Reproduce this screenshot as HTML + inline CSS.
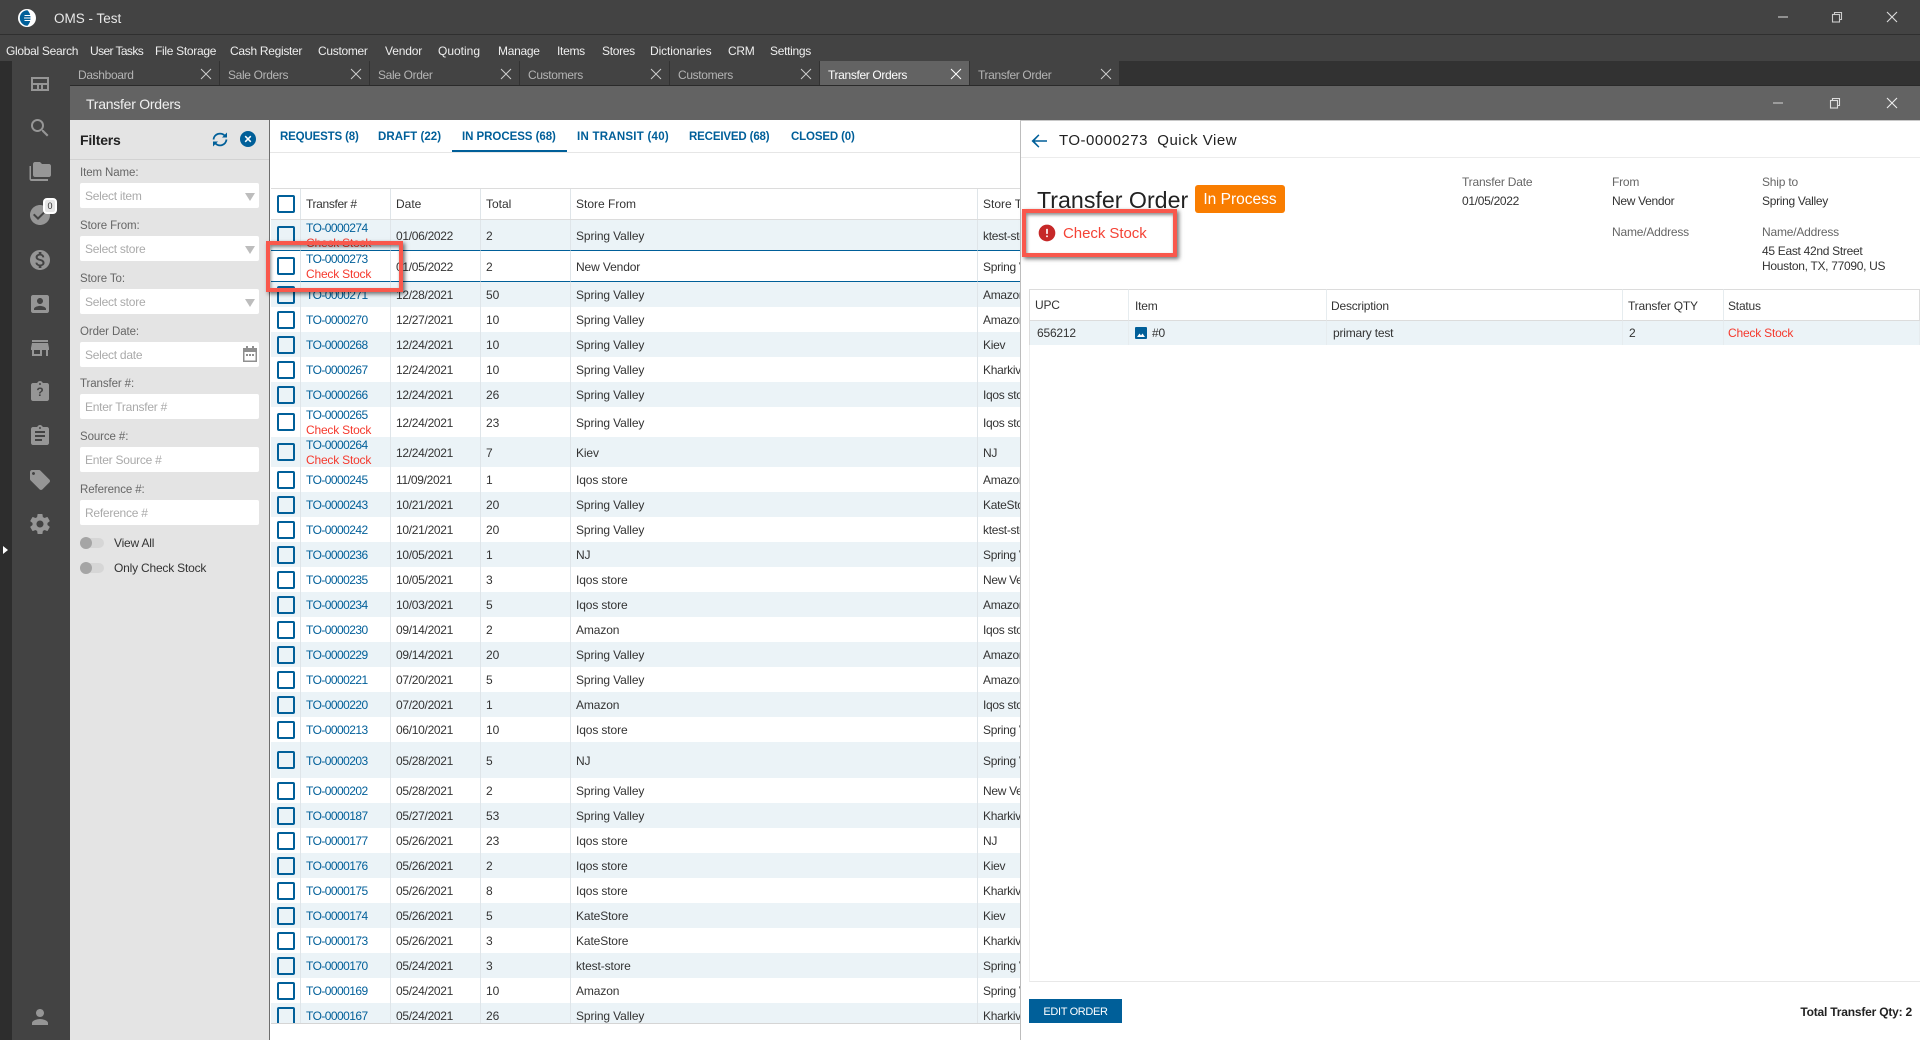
<!DOCTYPE html>
<html lang="en">
<head>
<meta charset="utf-8">
<title>OMS - Test</title>
<style>
*{box-sizing:border-box}
html,body{margin:0;padding:0;width:1920px;height:1040px;overflow:hidden;background:#fff;font-family:"Liberation Sans",sans-serif;font-size:12px;color:#333}
.a{position:absolute;white-space:nowrap}
svg{display:block}
.m{top:44px;color:#eee;font-size:12px;letter-spacing:-.3px;line-height:15px}
.tab{top:61px;height:24px;width:149px;background:#434343;color:#b4b4b4;font-size:12px;letter-spacing:-.35px;line-height:29px;padding-left:8px}
.tab.on{background:#636363;color:#fff}
.tab svg{position:absolute;right:7px;top:7px}
.ic{position:absolute;left:28px;width:24px;height:24px;fill:#969696}
.lb{left:80px;color:#666;font-size:11.5px;letter-spacing:-.1px;line-height:14px}
.in{left:80px;width:179px;height:25px;background:#fff;border-radius:2px;color:#aaa;font-size:12px;letter-spacing:-.25px;line-height:27px;padding-left:5px}
.in b{position:absolute;right:4px;top:10px;width:0;height:0;border-left:5px solid transparent;border-right:5px solid transparent;border-top:8px solid #bdbdbd}
.tg{left:80px;width:24px;height:10px;border-radius:5px;background:#d6d6d6}
.tg:before{content:"";position:absolute;left:0;top:-1px;width:12px;height:12px;border-radius:50%;background:#a5a5a5}
.tl{left:114px;font-size:12px;letter-spacing:-.2px;color:#333;line-height:15px}
.st{top:130px;color:#005f99;font-weight:bold;font-size:11.5px;letter-spacing:-.15px;line-height:15px}
table{border-collapse:separate;border-spacing:0;table-layout:fixed;position:absolute}
td{padding:2px 0 0 5px;border-right:1px solid #dfe5e9;line-height:15px;white-space:nowrap;overflow:hidden;vertical-align:middle;color:#333}
td:first-child{padding-top:0}
#g{left:0;top:0;width:760px}
#g td{font-size:12px}
#g td:nth-child(2){letter-spacing:-.55px}
#g td:nth-child(3){letter-spacing:-.3px}
#g td:nth-child(2) u{letter-spacing:-.2px}
#g td:nth-child(4){letter-spacing:-.1px}
#g td:nth-child(5){letter-spacing:-.12px}
#g td:nth-child(6){border-right:0;letter-spacing:-.3px}
#h td{padding-top:1px}
tr{height:25px}
tr.s td{background:#ebf3f7}
tr.d{height:30px}
.d td:nth-child(2),.sel td:nth-child(2){padding-top:0}
.d a,.sel a,.d u,.sel u{position:relative;top:1px}
a{color:#005f99;text-decoration:none}
u{display:block;color:#f5392d;text-decoration:none}
.c{display:block;width:18px;height:18px;margin-left:1px;border:2px solid #005f99;border-radius:2px}
tr.sel td{border-top:1px solid #005f99;border-bottom:1px solid #005f99;background:#fff}
.gl{color:#666;font-size:12px;letter-spacing:-.2px;line-height:15px}
.gv{color:#333;font-size:12px;letter-spacing:-.3px;line-height:15px}
.red{position:absolute;border:4px solid #f9584c;box-shadow:2px 2px 4px rgba(0,0,0,.55),inset 1px 2px 3px rgba(0,0,0,.45)}
#q td{font-size:12px;letter-spacing:-.2px;border-right:1px solid #e6ecef}
</style>
</head>
<body>
<div class="a" style="left:0;top:0;width:1920px;height:34px;background:#434343"></div>
<div class="a" style="left:0;top:34px;width:1920px;height:1px;background:#2f2f2f"></div>
<div class="a" style="left:0;top:35px;width:1920px;height:26px;background:#434343"></div>
<div class="a" style="left:0;top:61px;width:1920px;height:25px;background:#323232"></div>
<div class="a" style="left:0;top:85px;width:1920px;height:1px;background:#2a2a2a"></div>

<svg class="a" style="left:18px;top:9px" width="18" height="18" viewBox="0 0 18 18"><circle cx="9" cy="9" r="9" fill="#fff"/><path d="M9.500 1.300A7.700 7.700 0 0 0 9.500 16.700C12 14 12.500 11.500 12.500 9S12 4 9.500 1.300z" fill="#005f99"/><path d="M6.500 6.500h6.500M6 9h8.500M6.500 11.500h6.500" stroke="#fff" stroke-width="1.100"/></svg>
<div class="a" style="left:54px;top:10.500px;color:#e8e8e8;font-size:13.500px;letter-spacing:0;line-height:16px">OMS - Test</div>

<svg class="a" style="left:1777px;top:12px" width="12" height="10"><path d="M1 5h10" stroke="#bbb" stroke-width="1.300"/></svg>
<svg class="a" style="left:1831px;top:11px" width="12" height="12" fill="none" stroke="#ccc" stroke-width="1.100"><rect x="1.500" y="3.500" width="7" height="7.500"/><path d="M3.500 3.500V1.500h7v7H8.500"/></svg>
<svg class="a" style="left:1886px;top:11px" width="12" height="12"><path d="M1 1l10 10M11 1L1 11" stroke="#ddd" stroke-width="1.100"/></svg>

<div class="a m" style="left:6px">Global Search</div>
<div class="a m" style="left:90px;letter-spacing:-.6px">User Tasks</div>
<div class="a m" style="left:155px">File Storage</div>
<div class="a m" style="left:230px">Cash Register</div>
<div class="a m" style="left:318px">Customer</div>
<div class="a m" style="left:385px;letter-spacing:-.15px">Vendor</div>
<div class="a m" style="left:438px;letter-spacing:0">Quoting</div>
<div class="a m" style="left:498px">Manage</div>
<div class="a m" style="left:557px">Items</div>
<div class="a m" style="left:602px">Stores</div>
<div class="a m" style="left:650px;letter-spacing:-.1px">Dictionaries</div>
<div class="a m" style="left:728px">CRM</div>
<div class="a m" style="left:770px">Settings</div>

<div class="a tab" style="left:70px">Dashboard<svg width="12" height="12"><path d="M1 1l10 10M11 1L1 11" stroke="#ccc" stroke-width="1"/></svg></div>
<div class="a tab" style="left:220px">Sale Orders<svg width="12" height="12"><path d="M1 1l10 10M11 1L1 11" stroke="#ccc" stroke-width="1"/></svg></div>
<div class="a tab" style="left:370px">Sale Order<svg width="12" height="12"><path d="M1 1l10 10M11 1L1 11" stroke="#ccc" stroke-width="1"/></svg></div>
<div class="a tab" style="left:520px">Customers<svg width="12" height="12"><path d="M1 1l10 10M11 1L1 11" stroke="#ccc" stroke-width="1"/></svg></div>
<div class="a tab" style="left:670px">Customers<svg width="12" height="12"><path d="M1 1l10 10M11 1L1 11" stroke="#ccc" stroke-width="1"/></svg></div>
<div class="a tab on" style="left:820px">Transfer Orders<svg width="12" height="12"><path d="M1 1l10 10M11 1L1 11" stroke="#fff" stroke-width="1"/></svg></div>
<div class="a tab" style="left:970px">Transfer Order<svg width="12" height="12"><path d="M1 1l10 10M11 1L1 11" stroke="#ccc" stroke-width="1"/></svg></div>

<div class="a" style="left:0;top:61px;width:12px;height:979px;background:#2d2d2d"></div>
<div class="a" style="left:12px;top:61px;width:58px;height:979px;background:#434343"></div>

<svg class="ic" style="top:72px" viewBox="0 0 24 24"><path d="M3 5h18v14H3zM5 7v4h14V7zm0 6v4h4v-4zm6 0v4h2v-4zm4 0v4h4v-4z" fill-rule="evenodd"/></svg>
<svg class="ic" style="top:116px" viewBox="0 0 24 24"><path d="M15.500 14h-.79l-.28-.27A6.471 6.471 0 0 0 16 9.500 6.500 6.500 0 1 0 9.500 16c1.610 0 3.090-.59 4.230-1.570l.27.28v.79l5 4.990L20.490 19l-4.990-5zm-6 0C7.010 14 5 11.990 5 9.500S7.010 5 9.500 5 14 7.010 14 9.500 11.990 14 9.500 14z"/></svg>
<svg class="ic" style="top:160px" viewBox="0 0 24 24"><path d="M3 6H1.500v13c0 1.100.900 2 2 2H20v-2H3V6zm18-2h-7l-2-2H7c-1.100 0-2 .900-2 2v11c0 1.100.900 2 2 2h14c1.100 0 2-.900 2-2V6c0-1.100-.900-2-2-2z"/></svg>
<svg class="ic" style="top:203px" viewBox="0 0 24 24"><path d="M12 2C6.480 2 2 6.480 2 12s4.480 10 10 10 10-4.480 10-10S17.520 2 12 2zm-2 15l-5-5 1.410-1.410L10 14.170l7.590-7.590L19 8l-9 9z"/></svg>
<div class="a" style="left:43px;top:198px;width:14px;height:16px;background:#e6e6e6;border:2px solid #fff;border-radius:4px;font-size:9px;line-height:12px;text-align:center;color:#333">0</div>
<svg class="ic" style="top:248px" viewBox="0 0 24 24"><path d="M12 2C6.480 2 2 6.480 2 12s4.480 10 10 10 10-4.480 10-10S17.520 2 12 2zm1.410 16.090V20h-2.670v-1.930c-1.710-.360-3.160-1.460-3.270-3.400h1.960c.100 1.050.820 1.870 2.650 1.870 1.960 0 2.400-.980 2.400-1.590 0-.830-.440-1.610-2.670-2.140-2.480-.600-4.180-1.620-4.180-3.670 0-1.720 1.390-2.840 3.110-3.210V4h2.670v1.950c1.860.450 2.790 1.860 2.850 3.390H14.300c-.050-1.110-.640-1.870-2.220-1.870-1.500 0-2.400.680-2.400 1.640 0 .840.650 1.390 2.670 1.910s4.180 1.390 4.180 3.910c-.010 1.830-1.380 2.830-3.120 3.160z"/></svg>
<svg class="ic" style="top:292px" viewBox="0 0 24 24"><path d="M3 5v14c0 1.100.890 2 2 2h14c1.100 0 2-.900 2-2V5c0-1.100-.900-2-2-2H5c-1.110 0-2 .900-2 2zm12 4c0 1.660-1.340 3-3 3s-3-1.340-3-3 1.340-3 3-3 3 1.340 3 3zm-9 8c0-2 4-3.100 6-3.100s6 1.100 6 3.100v1H6v-1z"/></svg>
<svg class="ic" style="top:336px" viewBox="0 0 24 24"><path d="M20 4H4v2h16V4zm1 10v-2l-1-5H4l-1 5v2h1v6h10v-6h4v6h2v-6h1zm-9 4H6v-4h6v4z"/></svg>
<svg class="ic" style="top:380px" viewBox="0 0 24 24"><path d="M19 3h-4.180C14.400 1.840 13.300 1 12 1c-1.300 0-2.400.840-2.820 2H5c-1.100 0-2 .900-2 2v14c0 1.100.900 2 2 2h14c1.100 0 2-.900 2-2V5c0-1.100-.900-2-2-2zm-7 0c.550 0 1 .450 1 1s-.450 1-1 1-1-.450-1-1 .450-1 1-1z"/></svg>
<div class="a" style="left:36px;top:385px;width:8px;text-align:center;font-weight:bold;font-size:12px;line-height:15px;color:#434343">?</div>
<svg class="ic" style="top:424px" viewBox="0 0 24 24"><path d="M19 3h-4.180C14.400 1.840 13.300 1 12 1c-1.300 0-2.400.840-2.820 2H5c-1.100 0-2 .900-2 2v14c0 1.100.900 2 2 2h14c1.100 0 2-.900 2-2V5c0-1.100-.900-2-2-2zm-7 0c.550 0 1 .450 1 1s-.450 1-1 1-1-.450-1-1 .450-1 1-1zm2 14H7v-2h7v2zm3-4H7v-2h10v2zm0-4H7V7h10v2z"/></svg>
<svg class="ic" style="top:468px" viewBox="0 0 24 24"><path d="M21.410 11.580l-9-9C12.050 2.220 11.550 2 11 2H4c-1.100 0-2 .900-2 2v7c0 .550.220 1.050.590 1.420l9 9c.360.360.860.580 1.410.580.550 0 1.050-.220 1.410-.590l7-7c.370-.360.590-.860.590-1.410 0-.550-.230-1.060-.590-1.420zM5.500 7C4.670 7 4 6.330 4 5.500S4.670 4 5.500 4 7 4.670 7 5.500 6.330 7 5.500 7z"/></svg>
<svg class="ic" style="top:512px" viewBox="0 0 24 24"><path d="M19.430 12.980c.040-.320.070-.640.070-.980s-.030-.660-.070-.980l2.110-1.650c.190-.150.240-.420.120-.640l-2-3.460c-.120-.220-.390-.300-.610-.220l-2.490 1c-.520-.400-1.080-.730-1.690-.980l-.380-2.650C14.460 2.180 14.250 2 14 2h-4c-.250 0-.460.180-.490.420l-.380 2.650c-.610.250-1.170.590-1.690.980l-2.490-1c-.230-.090-.490 0-.610.220l-2 3.460c-.130.220-.070.490.120.640l2.110 1.650c-.040.320-.070.650-.070.980s.030.660.070.980l-2.110 1.650c-.190.150-.240.420-.120.640l2 3.460c.120.220.390.300.610.220l2.490-1c.520.400 1.080.730 1.690.980l.380 2.650c.030.240.240.420.490.420h4c.250 0 .460-.180.490-.420l.380-2.650c.610-.250 1.170-.590 1.690-.980l2.490 1c.230.090.490 0 .610-.220l2-3.460c.120-.220.070-.490-.120-.640l-2.110-1.650zM12 15.500c-1.930 0-3.500-1.570-3.500-3.500s1.570-3.500 3.500-3.500 3.500 1.570 3.500 3.500-1.570 3.500-3.500 3.500z"/></svg>
<svg class="ic" style="top:1005px" viewBox="0 0 24 24"><path d="M12 12c2.210 0 4-1.790 4-4s-1.790-4-4-4-4 1.790-4 4 1.790 4 4 4zm0 2c-2.670 0-8 1.340-8 4v2h16v-2c0-2.660-5.330-4-8-4z"/></svg>
<div class="a" style="left:3px;top:546px;width:0;height:0;border-top:4.500px solid transparent;border-bottom:4.500px solid transparent;border-left:5px solid #fff"></div>

<div class="a" style="left:70px;top:86px;width:1850px;height:34px;background:#636363"></div>
<div class="a" style="left:86px;top:96px;color:#f0f0f0;font-size:14px;letter-spacing:-.25px;line-height:17px">Transfer Orders</div>
<svg class="a" style="left:1772px;top:98px" width="12" height="10"><path d="M1 5h10" stroke="#bbb" stroke-width="1.300"/></svg>
<svg class="a" style="left:1829px;top:97px" width="12" height="12" fill="none" stroke="#ddd" stroke-width="1.100"><rect x="1.500" y="3.500" width="7" height="7.500"/><path d="M3.500 3.500V1.500h7v7H8.500"/></svg>
<svg class="a" style="left:1886px;top:97px" width="12" height="12"><path d="M1 1l10 10M11 1L1 11" stroke="#eee" stroke-width="1.100"/></svg>

<div class="a" style="left:70px;top:120px;width:199px;height:920px;background:#e4e4e4"></div>
<div class="a" style="left:269px;top:120px;width:1px;height:920px;background:#6e6e6e"></div>
<div class="a" style="left:70px;top:159px;width:199px;height:1px;background:#d2d2d2"></div>
<div class="a" style="left:80px;top:131px;font-weight:bold;font-size:14px;letter-spacing:-.2px;color:#222;line-height:18px">Filters</div>
<svg class="a" style="left:210px;top:131px" width="20" height="17" viewBox="0 0 20 17" fill="none" stroke="#005f99" stroke-width="1.800"><path d="M3.500 8.500A6.500 6.500 0 0 1 15 5"/><path d="M16.500 8.500A6.500 6.500 0 0 1 5 12"/><path d="M17 1.500v5h-5z" fill="#005f99" stroke="none"/><path d="M3 15.500v-5h5z" fill="#005f99" stroke="none"/></svg>
<svg class="a" style="left:240px;top:131px" width="16" height="16" viewBox="0 0 16 16"><circle cx="8" cy="8" r="8" fill="#005f99"/><path d="M5.200 5.200l5.600 5.600M10.800 5.200l-5.600 5.600" stroke="#fff" stroke-width="1.500"/></svg>

<div class="a lb" style="top:166px">Item Name:</div>
<div class="a in" style="top:183px">Select item<b></b></div>
<div class="a lb" style="top:219px">Store From:</div>
<div class="a in" style="top:236px">Select store<b></b></div>
<div class="a lb" style="top:272px">Store To:</div>
<div class="a in" style="top:289px">Select store<b></b></div>
<div class="a lb" style="top:325px">Order Date:</div>
<div class="a in" style="top:342px">Select date</div>
<svg class="a" style="left:243px;top:346px" width="14" height="16" viewBox="0 0 14 16"><path d="M3 0h2v2h4V0h2v2h3v14H0V2h3z" fill="#8f8f8f"/><path d="M1.500 6h11v8.500h-11z" fill="#fff"/><path d="M3 8h2v2H3zM6 8h2v2H6zM9 8h2v2H9z" fill="#8f8f8f"/></svg>
<div class="a lb" style="top:377px">Transfer #:</div>
<div class="a in" style="top:394px">Enter Transfer #</div>
<div class="a lb" style="top:430px">Source #:</div>
<div class="a in" style="top:447px">Enter Source #</div>
<div class="a lb" style="top:483px">Reference #:</div>
<div class="a in" style="top:500px">Reference #</div>
<div class="a tg" style="top:538px"></div>
<div class="a tl" style="top:536px">View All</div>
<div class="a tg" style="top:563px"></div>
<div class="a tl" style="top:561px">Only Check Stock</div>

<div class="a" style="left:270px;top:120px;width:750px;height:920px;background:#fff"></div>
<div class="a st" style="left:280px">REQUESTS (8)</div>
<div class="a st" style="left:378px;letter-spacing:.05px">DRAFT (22)</div>
<div class="a st" style="left:462px;letter-spacing:-.05px">IN PROCESS (68)</div>
<div class="a st" style="left:577px;letter-spacing:.25px">IN TRANSIT (40)</div>
<div class="a st" style="left:689px">RECEIVED (68)</div>
<div class="a st" style="left:791px">CLOSED (0)</div>
<div class="a" style="left:270px;top:152px;width:750px;height:1px;background:#e6e6e6"></div>
<div class="a" style="left:452px;top:150px;width:115px;height:2px;background:#005f99"></div>

<div class="a" style="left:271px;top:188px;width:749px;height:32px;overflow:hidden;background:#fff;border-top:1px solid #dcdcdc;border-bottom:1px solid #dcdcdc">
<table id="h" style="left:0;top:0;width:760px"><colgroup><col style="width:30px"><col style="width:90px"><col style="width:90px"><col style="width:90px"><col style="width:407px"><col style="width:53px"></colgroup>
<tr style="height:30px"><td style="padding-top:0"><i class="c"></i></td><td style="letter-spacing:-.35px">Transfer #</td><td>Date</td><td>Total</td><td>Store From</td><td style="border:0">Store To</td></tr></table>
</div>

<div class="a" style="left:271px;top:220px;width:749px;height:803px;overflow:hidden">
<table id="g"><colgroup><col style="width:30px"><col style="width:90px"><col style="width:90px"><col style="width:90px"><col style="width:407px"><col style="width:53px"></colgroup>
<tr class="s d"><td><i class="c"></i></td><td><a>TO-0000274</a><u>Check Stock</u></td><td>01/06/2022</td><td>2</td><td>Spring Valley</td><td>ktest-store</td></tr>
<tr class="sel" style="height:32px"><td><i class="c"></i></td><td><a>TO-0000273</a><u>Check Stock</u></td><td>01/05/2022</td><td>2</td><td>New Vendor</td><td>Spring Valley</td></tr>
<tr class="s"><td><i class="c"></i></td><td><a>TO-0000271</a></td><td>12/28/2021</td><td>50</td><td>Spring Valley</td><td>Amazon</td></tr>
<tr><td><i class="c"></i></td><td><a>TO-0000270</a></td><td>12/27/2021</td><td>10</td><td>Spring Valley</td><td>Amazon</td></tr>
<tr class="s"><td><i class="c"></i></td><td><a>TO-0000268</a></td><td>12/24/2021</td><td>10</td><td>Spring Valley</td><td>Kiev</td></tr>
<tr><td><i class="c"></i></td><td><a>TO-0000267</a></td><td>12/24/2021</td><td>10</td><td>Spring Valley</td><td>Kharkiv</td></tr>
<tr class="s"><td><i class="c"></i></td><td><a>TO-0000266</a></td><td>12/24/2021</td><td>26</td><td>Spring Valley</td><td>Iqos store</td></tr>
<tr class="d"><td><i class="c"></i></td><td><a>TO-0000265</a><u>Check Stock</u></td><td>12/24/2021</td><td>23</td><td>Spring Valley</td><td>Iqos store</td></tr>
<tr class="s d"><td><i class="c"></i></td><td><a>TO-0000264</a><u>Check Stock</u></td><td>12/24/2021</td><td>7</td><td>Kiev</td><td>NJ</td></tr>
<tr><td><i class="c"></i></td><td><a>TO-0000245</a></td><td>11/09/2021</td><td>1</td><td>Iqos store</td><td>Amazon</td></tr>
<tr class="s"><td><i class="c"></i></td><td><a>TO-0000243</a></td><td>10/21/2021</td><td>20</td><td>Spring Valley</td><td>KateStore</td></tr>
<tr><td><i class="c"></i></td><td><a>TO-0000242</a></td><td>10/21/2021</td><td>20</td><td>Spring Valley</td><td>ktest-store</td></tr>
<tr class="s"><td><i class="c"></i></td><td><a>TO-0000236</a></td><td>10/05/2021</td><td>1</td><td>NJ</td><td>Spring Valley</td></tr>
<tr><td><i class="c"></i></td><td><a>TO-0000235</a></td><td>10/05/2021</td><td>3</td><td>Iqos store</td><td>New Vendor</td></tr>
<tr class="s"><td><i class="c"></i></td><td><a>TO-0000234</a></td><td>10/03/2021</td><td>5</td><td>Iqos store</td><td>Amazon</td></tr>
<tr><td><i class="c"></i></td><td><a>TO-0000230</a></td><td>09/14/2021</td><td>2</td><td>Amazon</td><td>Iqos store</td></tr>
<tr class="s"><td><i class="c"></i></td><td><a>TO-0000229</a></td><td>09/14/2021</td><td>20</td><td>Spring Valley</td><td>Amazon</td></tr>
<tr><td><i class="c"></i></td><td><a>TO-0000221</a></td><td>07/20/2021</td><td>5</td><td>Spring Valley</td><td>Amazon</td></tr>
<tr class="s"><td><i class="c"></i></td><td><a>TO-0000220</a></td><td>07/20/2021</td><td>1</td><td>Amazon</td><td>Iqos store</td></tr>
<tr><td><i class="c"></i></td><td><a>TO-0000213</a></td><td>06/10/2021</td><td>10</td><td>Iqos store</td><td>Spring Valley</td></tr>
<tr class="s" style="height:36px"><td><i class="c"></i></td><td><a>TO-0000203</a></td><td>05/28/2021</td><td>5</td><td>NJ</td><td>Spring Valley</td></tr>
<tr><td><i class="c"></i></td><td><a>TO-0000202</a></td><td>05/28/2021</td><td>2</td><td>Spring Valley</td><td>New Vendor</td></tr>
<tr class="s"><td><i class="c"></i></td><td><a>TO-0000187</a></td><td>05/27/2021</td><td>53</td><td>Spring Valley</td><td>Kharkiv</td></tr>
<tr><td><i class="c"></i></td><td><a>TO-0000177</a></td><td>05/26/2021</td><td>23</td><td>Iqos store</td><td>NJ</td></tr>
<tr class="s"><td><i class="c"></i></td><td><a>TO-0000176</a></td><td>05/26/2021</td><td>2</td><td>Iqos store</td><td>Kiev</td></tr>
<tr><td><i class="c"></i></td><td><a>TO-0000175</a></td><td>05/26/2021</td><td>8</td><td>Iqos store</td><td>Kharkiv</td></tr>
<tr class="s"><td><i class="c"></i></td><td><a>TO-0000174</a></td><td>05/26/2021</td><td>5</td><td>KateStore</td><td>Kiev</td></tr>
<tr><td><i class="c"></i></td><td><a>TO-0000173</a></td><td>05/26/2021</td><td>3</td><td>KateStore</td><td>Kharkiv</td></tr>
<tr class="s"><td><i class="c"></i></td><td><a>TO-0000170</a></td><td>05/24/2021</td><td>3</td><td>ktest-store</td><td>Spring Valley</td></tr>
<tr><td><i class="c"></i></td><td><a>TO-0000169</a></td><td>05/24/2021</td><td>10</td><td>Amazon</td><td>Spring Valley</td></tr>
<tr class="s"><td><i class="c"></i></td><td><a>TO-0000167</a></td><td>05/24/2021</td><td>26</td><td>Spring Valley</td><td>Kharkiv</td></tr>
</table>
</div>
<div class="a" style="left:271px;top:1023px;width:749px;height:1px;background:#d5d5d5"></div>

<div class="a" style="left:1020px;top:120px;width:900px;height:920px;background:#fff;border-left:1px solid #bdbdbd;border-top:1px solid #c8c8c8"></div>
<svg class="a" style="left:1027px;top:129px" width="24" height="24" viewBox="0 0 24 24" fill="#005f99"><path d="M20 11.200H7.830l4.590-4.790L11.400 5.400 4.500 12l6.900 6.600 1.020-1.010-4.590-4.790H20z"/></svg>
<div class="a" style="left:1059px;top:132px;font-size:15px;letter-spacing:.5px;color:#222;line-height:18px">TO-0000273&nbsp; Quick View</div>
<div class="a" style="left:1021px;top:157px;width:899px;height:1px;background:#ececec"></div>

<div class="a" style="left:1037px;top:186px;font-size:23.200px;color:#222;line-height:28px">Transfer Order</div>
<div class="a" style="left:1195px;top:185px;width:90px;height:28px;background:#f97d00;border-radius:3px;color:#fff;font-size:15.500px;text-align:center;line-height:30px">In Process</div>

<svg class="a" style="left:1037px;top:223px" width="20" height="20" viewBox="0 0 24 24" fill="#c62828"><path d="M12 2C6.480 2 2 6.480 2 12s4.480 10 10 10 10-4.480 10-10S17.520 2 12 2zm1 15h-2v-2h2v2zm0-4h-2V7h2v6z"/></svg>
<div class="a" style="left:1063px;top:225px;font-size:15px;letter-spacing:-.05px;color:#f44336;line-height:18px">Check Stock</div>

<div class="a gl" style="left:1462px;top:175px">Transfer Date</div>
<div class="a gv" style="left:1462px;top:194px">01/05/2022</div>
<div class="a gl" style="left:1612px;top:175px">From</div>
<div class="a gv" style="left:1612px;top:194px">New Vendor</div>
<div class="a gl" style="left:1762px;top:175px">Ship to</div>
<div class="a gv" style="left:1762px;top:194px">Spring Valley</div>
<div class="a gl" style="left:1612px;top:225px">Name/Address</div>
<div class="a gl" style="left:1762px;top:225px">Name/Address</div>
<div class="a gv" style="left:1762px;top:244px">45 East 42nd Street</div>
<div class="a gv" style="left:1762px;top:259px">Houston, TX, 77090, US</div>

<div class="a" style="left:1029px;top:289px;width:891px;height:693px;border-left:1px solid #eee;border-bottom:1px solid #e8e8e8"></div>
<div class="a" style="left:1029px;top:289px;width:891px;height:57px;overflow:hidden">
<table id="q" style="left:0;top:0;width:891px"><colgroup><col style="width:100px"><col style="width:198px"><col style="width:296px"><col style="width:101px"><col style="width:196px"></colgroup>
<tr style="height:32px"><td style="border-top:1px solid #dcdcdc;border-bottom:1px solid #dcdcdc;border-left:1px solid #dcdcdc;padding-left:5px">UPC</td><td style="border-top:1px solid #dcdcdc;border-bottom:1px solid #dcdcdc;padding-left:6px">Item</td><td style="border-top:1px solid #dcdcdc;border-bottom:1px solid #dcdcdc;padding-left:4px">Description</td><td style="border-top:1px solid #dcdcdc;border-bottom:1px solid #dcdcdc;padding-left:5px">Transfer QTY</td><td style="border-top:1px solid #dcdcdc;border-bottom:1px solid #dcdcdc;padding-left:4px;border-right:1px solid #dcdcdc">Status</td></tr>
<tr class="s" style="height:24px"><td style="padding-left:7px;padding-top:1px;border-left:1px solid #dcdcdc">656212</td><td style="padding-left:6px;padding-top:1px"><svg style="display:inline-block;vertical-align:-2px;margin-right:5px" width="12" height="12" viewBox="0 0 12 12"><rect width="12" height="12" rx="1" fill="#005f99"/><path d="M2 10l2.500-3.500L6 8.500 7.500 6.500 10 10z" fill="#fff"/></svg>#0</td><td style="padding-left:6px;padding-top:1px">primary test</td><td style="padding-left:6px;padding-top:1px">2</td><td style="padding-left:4px;padding-top:1px;color:#f5392d">Check Stock</td></tr>
</table>
</div>

<div class="a" style="left:1029px;top:999px;width:93px;height:24px;background:#005f99;color:#fff;font-size:11px;letter-spacing:-.35px;text-align:center;line-height:26px">EDIT ORDER</div>
<div class="a" style="right:8px;top:1005px;font-weight:bold;font-size:12px;letter-spacing:-.2px;color:#222;line-height:15px">Total Transfer Qty: 2</div>

<div class="red" style="left:266px;top:241px;width:137px;height:51px"></div>
<div class="red" style="left:1022px;top:209px;width:155px;height:48px"></div>
</body>
</html>
